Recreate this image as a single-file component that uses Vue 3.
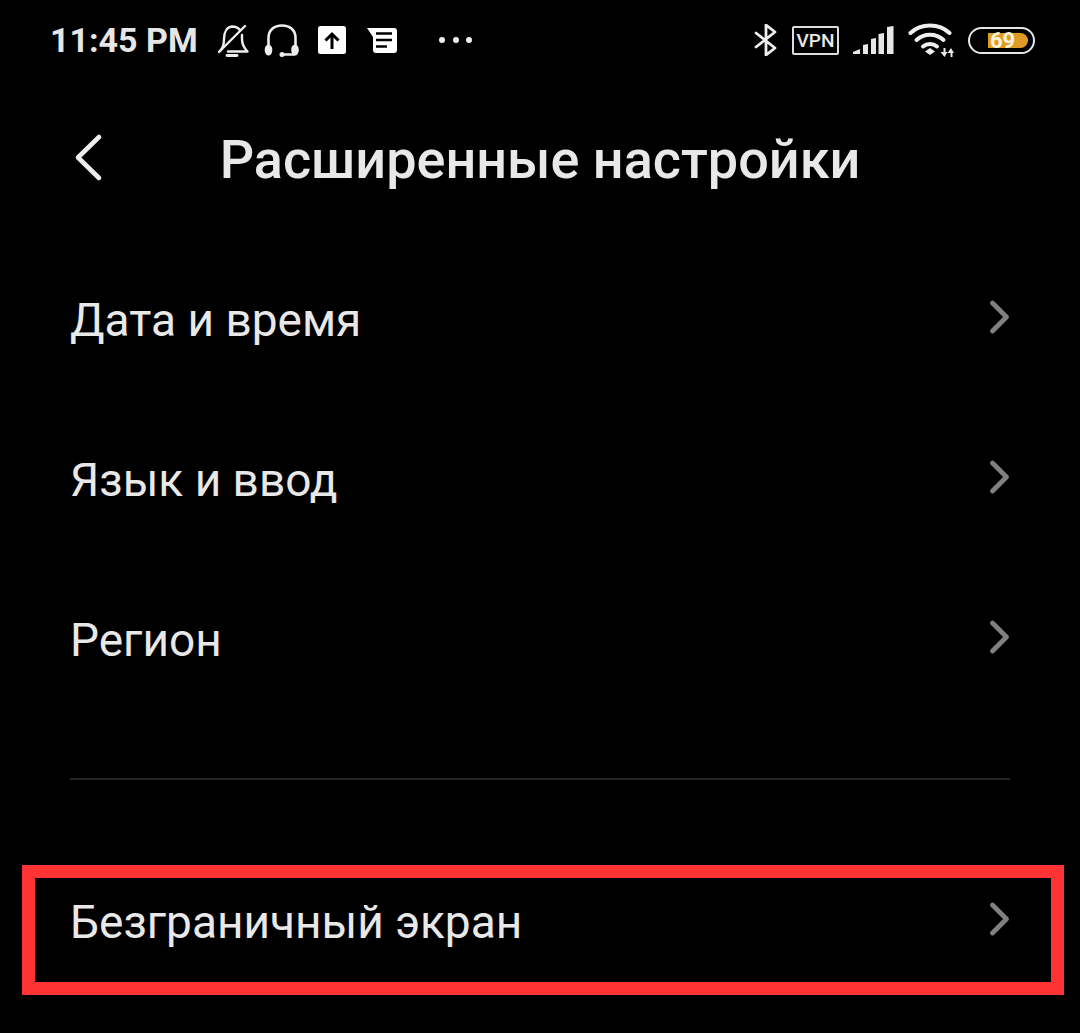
<template>
  <div class="screen">
    <!-- Status bar -->
    <div class="status-bar">
      <div class="status-left">
        <span class="time">11:45 PM</span>
        <svg class="icon-bell" width="36" height="36" viewBox="0 0 36 36" fill="none" stroke="#eee" stroke-width="2.4" stroke-linecap="round" stroke-linejoin="round">
          <path d="M4 29c3-3 4-7 4-12 0-7 3-12 8-12.500 3 0 6 1 8 3.500" />
          <path d="M26 13v4c0 5 2 9 5.500 12.500H12" />
          <path d="M11 33.500h10" stroke-width="2.800" />
          <path d="M3 30L29 4" />
        </svg>
        <svg class="icon-headset" width="36" height="36" viewBox="0 0 36 36" fill="none" stroke="#eee" stroke-width="2.600" stroke-linecap="round">
          <path d="M4.500 24V16C4.500 8 10 3.500 18 3.500S31.500 8 31.500 16v8" />
          <path d="M18 32.500h12" />
          <ellipse cx="4.500" cy="28" rx="3.800" ry="5.500" fill="#eee" stroke="none" />
          <ellipse cx="31" cy="28" rx="3.800" ry="5.500" fill="#eee" stroke="none" />
          <circle cx="18" cy="32.500" r="2.500" fill="#eee" stroke="none" />
        </svg>
        <svg class="icon-upload" width="28" height="28" viewBox="0 0 28 28">
          <rect width="28" height="28" rx="2.500" fill="#fff" />
          <path d="M14 23V9M7.500 14.500L14 8l6.500 6.500" fill="none" stroke="#000" stroke-width="3" />
        </svg>
        <svg class="icon-message" width="30" height="25" viewBox="0 0 30 25">
          <path d="M0 0h27a3 3 0 0 1 3 3v19a3 3 0 0 1-3 3H9a3 3 0 0 1-3-3V9z" fill="#fff" />
          <path d="M9 5.500h16M9 12h16M9 18.500h11" stroke="#000" stroke-width="2.600" fill="none" />
        </svg>
        <div class="dots"><i></i><i></i><i></i></div>
      </div>
      <div class="status-right">
        <svg width="24" height="32" viewBox="0 0 24 32" fill="none" stroke="#eee" stroke-width="2.800" stroke-linejoin="round" stroke-linecap="round">
          <path d="M2 9l19 15-9 7V1l9 7L2 23" />
        </svg>
        <div class="vpn">VPN</div>
        <svg width="41" height="28" viewBox="0 0 41 28" fill="#e8e8e8">
          <path d="M0 28v-2l7-3v5z" />
          <path d="M10 28V19l5-1v10zM18 28V13l5-1v16zM25.500 28V8l5.500-1v21zM34 28V1l6.500-1v28z" />
        </svg>
        <svg width="46" height="34" viewBox="0 0 46 34" fill="none" stroke="#eee" stroke-width="4" stroke-linecap="round">
          <path d="M2.500 10C13 0 31 0 41.500 10" />
          <path d="M8.500 17C16 10 28 10 35.500 17" />
          <path d="M15 23.500c4-3.500 10-3.500 14 0" />
          <path d="M17 28.500l5-3.500 5 3.500-5 3.500z" fill="#eee" stroke="none" />
          <path d="M32.500 29l3 0v-4h2v4l2 0-3 5zM39.500 30l3 0v4h2v-4l1.500 0-3-5z" fill="#e8e8e8" stroke="none" />
        </svg>
        <div class="battery"><div class="battery-fill" :style="{ width: battery + '%' }"><span>{{ battery }}</span></div></div>
      </div>
    </div>

    <!-- Header -->
    <div class="header">
      <svg class="back" width="32" height="50" viewBox="0 0 32 50" fill="none" stroke="#eee" stroke-width="4.600" stroke-linecap="round" stroke-linejoin="round">
        <path d="M27 4L6 24.500 27 45" />
      </svg>
      <div class="title">Расширенные настройки</div>
    </div>

    <!-- Settings rows -->
    <div class="list">
      <div v-for="item in items" :key="item" class="row">
        <span class="row-label">{{ item }}</span>
        <svg class="chevron" width="24" height="36" viewBox="0 0 24 36" fill="none" stroke="#808080" stroke-width="4.800" stroke-linecap="round" stroke-linejoin="round">
          <path d="M6.500 4l14 14-14 14" />
        </svg>
      </div>
    </div>

    <div class="divider"></div>

    <div class="highlight">
      <span class="row-label">Безграничный экран</span>
      <svg class="chevron" width="24" height="36" viewBox="0 0 24 36" fill="none" stroke="#808080" stroke-width="4.800" stroke-linecap="round" stroke-linejoin="round">
        <path d="M6.500 4l14 14-14 14" />
      </svg>
    </div>
  </div>
</template>

<script setup>
const battery = 69
const items = ['Дата и время', 'Язык и ввод', 'Регион']
</script>

<style>
html, body {
  background: #000;
}
</style>

<style scoped>
.screen {
  width: 1080px;
  height: 1033px;
  background: #000;
  color: #e8e8e8;
  font-family: Roboto, "Noto Sans", sans-serif;
  overflow: hidden;
}

.status-bar {
  height: 80px;
  padding: 0 45px 0 50px;
  display: flex;
  align-items: center;
  justify-content: space-between;
  box-sizing: border-box;
}

.status-left,
.status-right {
  display: flex;
  align-items: center;
}

.time {
  width: 166px;
  font-weight: 700;
  font-size: 34px;
  line-height: 40px;
  color: #e6e6e6;
  white-space: nowrap;
}

.icon-headset {
  margin-left: 12px;
}

.icon-upload {
  margin-left: 18px;
}

.icon-message {
  margin-left: 21px;
}

.dots {
  display: flex;
  gap: 7.5px;
  margin-left: 42px;
}

.dots i {
  width: 6px;
  height: 6px;
  border-radius: 50%;
  background: #eee;
}

.status-right {
  gap: 14px;
}

.vpn {
  width: 47px;
  height: 29px;
  border: 2px solid #ddd;
  border-radius: 2px;
  box-sizing: border-box;
  font-weight: 500;
  font-size: 19px;
  line-height: 25px;
  text-align: center;
  color: #e8e8e8;
}

.battery {
  width: 67px;
  height: 27px;
  padding: 4px 5px 4px 0;
  border: 2.5px solid #e6e6e6;
  border-radius: 14px;
  box-sizing: border-box;
  display: flex;
  justify-content: flex-end;
}

.battery-fill {
  height: 100%;
  background: #e09a26;
  border-radius: 0 10px 10px 0;
  font-weight: 700;
  font-size: 22px;
  line-height: 15px;
  color: #fff3d8;
}

.battery-fill span {
  display: block;
  margin-left: 2px;
}

.header {
  position: relative;
  height: 160px;
  display: flex;
  align-items: center;
  justify-content: center;
}

.back {
  position: absolute;
  left: 72px;
  top: 53px;
}

.title {
  font-weight: 500;
  font-size: 54px;
  line-height: 60px;
  color: #e8e8e8;
}

.row {
  height: 160px;
  padding: 0 70px;
  display: flex;
  align-items: center;
  justify-content: space-between;
}

.row-label {
  font-size: 46px;
  line-height: 54px;
  color: #e8e8e8;
}

.chevron {
  margin-top: -6px;
}

.divider {
  height: 2px;
  margin: 58px 70px 0;
  background: #262626;
}

.highlight {
  width: 1042px;
  height: 130px;
  margin: 85px 0 0 22px;
  padding: 0 41px 16px 35px;
  border: 13px solid #ff3333;
  box-sizing: border-box;
  display: flex;
  align-items: center;
  justify-content: space-between;
}
</style>
